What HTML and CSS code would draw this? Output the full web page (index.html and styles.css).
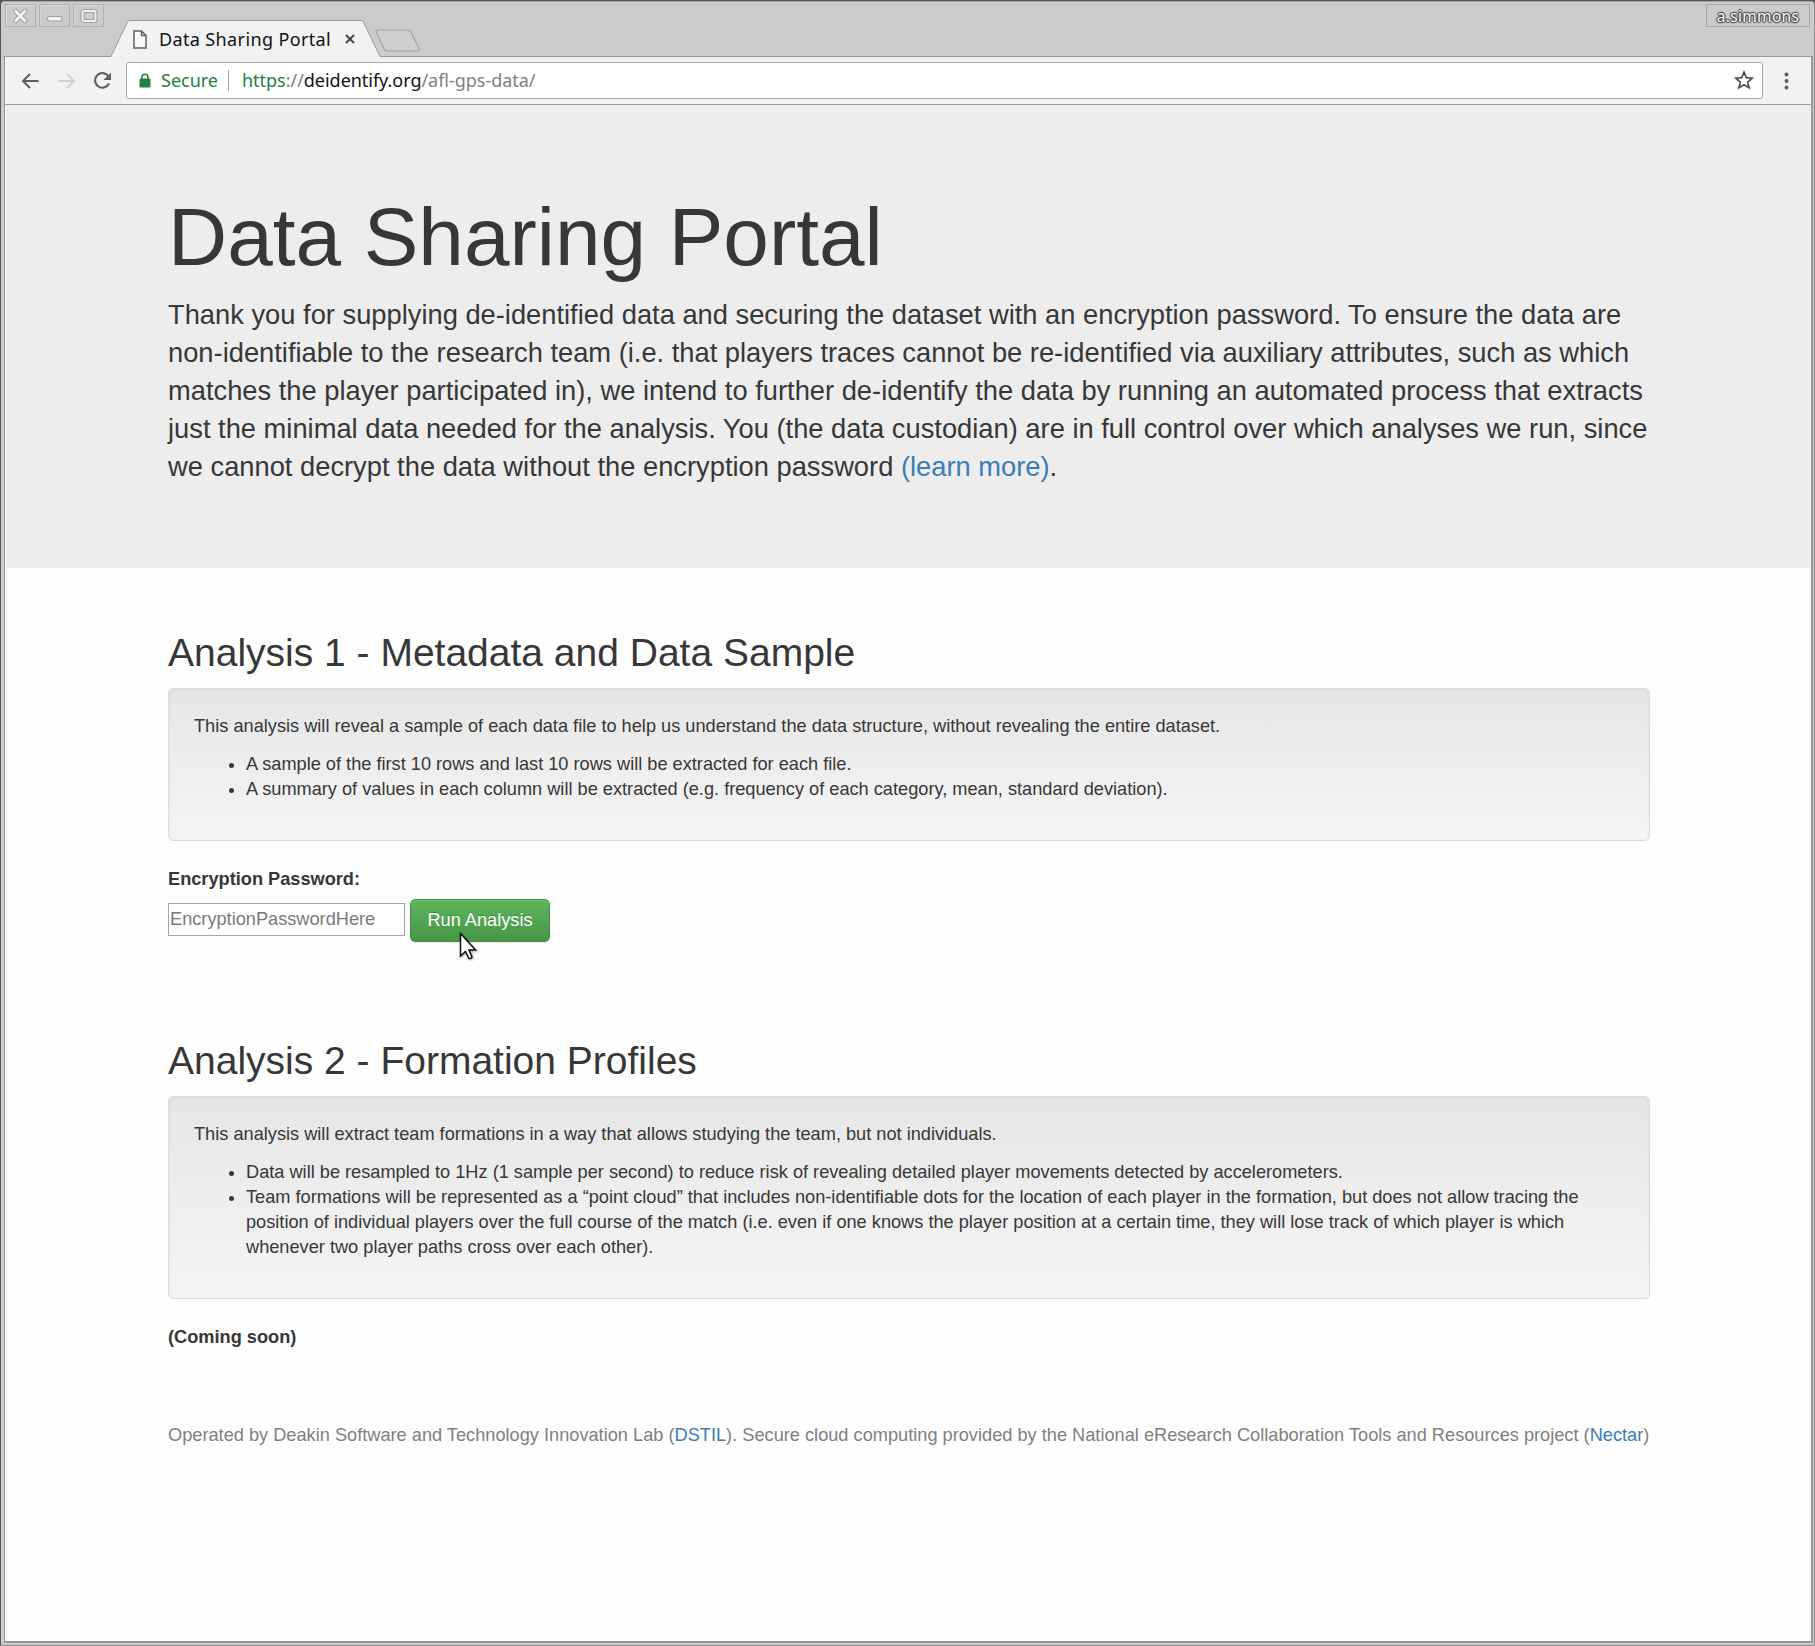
FILE: index.html
```html
<!DOCTYPE html>
<html lang="en">
<head>
<meta charset="utf-8">
<title>Data Sharing Portal</title>
<link rel="stylesheet" href="styles.css">
</head>
<body>
<div class="window">
  <header class="tabstrip">
    <div class="controls">
      <span class="control"><svg width="30" height="22" viewBox="0 0 30 22"><g fill="none" stroke-linecap="round"><path d="M9.5 6l9.500 10M19 6l-9.500 10" stroke="#a2a2a2" stroke-width="4.800"/><path d="M9.5 6l9.500 10M19 6l-9.500 10" stroke="#f4f4f4" stroke-width="2.600"/></g></svg></span>
      <span class="control"><svg width="30" height="22" viewBox="0 0 30 22"><rect x="7.5" y="11.500" width="14.500" height="4.500" rx="2" fill="#f4f4f4" stroke="#a0a0a0" stroke-width="1.200"/></svg></span>
      <span class="control"><svg width="30" height="22" viewBox="0 0 30 22"><rect x="8.500" y="6" width="13" height="10" rx="1.500" fill="none" stroke="#a0a0a0" stroke-width="4.200"/><rect x="8.500" y="6" width="13" height="10" rx="1.500" fill="none" stroke="#efefef" stroke-width="2"/></svg></span>
    </div>
    <div class="tab">
      <svg class="tab-shape" width="270" height="38" viewBox="0 0 270 38"><path d="M0 36.500L16.500 2Q17.500.500 19 .500H250Q251.500.500 252.500 2L269 36.500V38H0z" fill="#f2f2f2"/><path d="M0 36.500L16.500 2Q17.500.500 19 .500H250Q251.500.500 252.500 2L269 36.500" fill="none" stroke="#999"/></svg>
      <svg class="page-icon" width="14" height="19" viewBox="0 0 14 19"><path d="M1 1H8.500L13 5.500V18H1zM8.500 1V5.500H13" fill="#f8f8f8" stroke="#606060" stroke-width="1.500"/></svg>
      <span class="tab-title">Data Sharing Portal</span>
      <svg class="tab-close" width="10" height="10" viewBox="0 0 10 10"><path d="M1 1l8 8M9 1L1 9" stroke="#444" stroke-width="1.900"/></svg>
    </div>
    <svg class="new-tab" width="46" height="23" viewBox="0 0 46 23"><path d="M3.500 1H33Q35 1 36 3L44 19.500Q45 22 43 22H12Q10 22 9 20L1.500 3.500Q.500 1 3.500 1z" fill="#cecece" stroke="#a2a2a2" stroke-width="1.200"/></svg>
    <span class="user">a.simmons</span>
  </header>
  <nav class="toolbar">
    <svg class="back" width="18" height="16" viewBox="0 0 18 16"><path d="M17.500 8H2M9 1L2 8l7 7" fill="none" stroke="#5d5e60" stroke-width="2"/></svg>
    <svg class="forward" width="18" height="16" viewBox="0 0 18 16"><path d="M.500 8H16M9 1l7 7-7 7" fill="none" stroke="#d0d0d0" stroke-width="2"/></svg>
    <svg class="reload" width="19" height="18" viewBox="0 0 19 18"><path d="M15.600 4.500A7.300 7.300 0 1 0 16 11.500" fill="none" stroke="#5d5e60" stroke-width="2.100"/><path d="M18 .500V8H10.500z" fill="#5d5e60"/></svg>
    <div class="address">
      <svg class="lock" width="12" height="15" viewBox="0 0 12 15"><path d="M3 7V4.200a3 3 0 0 1 6 0V7" fill="none" stroke="#238140" stroke-width="1.600"/><rect x=".5" y="5.500" width="11" height="9" rx="1.200" fill="#238140"/></svg>
      <span class="secure">Secure</span>
      <span class="divider"></span>
      <span class="url"><span class="scheme">https</span>://<span class="host">deidentify.org</span>/afl-gps-data/</span>
      <svg class="star" width="20" height="20" viewBox="0 0 20 20"><path d="M10 2.200L12.300 7.700L18.200 8.200L13.700 12L15.100 17.800L10 14.700L4.900 17.800L6.300 12L1.800 8.200L7.700 7.700z" fill="none" stroke="#505050" stroke-width="1.700"/></svg>
    </div>
    <svg class="menu" width="5" height="18" viewBox="0 0 5 18"><g fill="#5d5e60"><circle cx="2.500" cy="2.500" r="2"/><circle cx="2.500" cy="9" r="2"/><circle cx="2.500" cy="15.500" r="2"/></g></svg>
  </nav>
  <main class="page">
    <section class="jumbotron">
      <div class="container">
        <h1>Data Sharing Portal</h1>
        <p>Thank you for supplying de-identified data and securing the dataset with an encryption password. To ensure the data are non-identifiable to the research team (i.e. that players traces cannot be re-identified via auxiliary attributes, such as which matches the player participated in), we intend to further de-identify the data by running an automated process that extracts just the minimal data needed for the analysis. You (the data custodian) are in full control over which analyses we run, since we cannot decrypt the data without the encryption password <a href="#">(learn more)</a>.</p>
      </div>
    </section>
    <div class="container">
      <section class="analysis">
        <h2>Analysis 1 - Metadata and Data Sample</h2>
        <div class="well">
          <p>This analysis will reveal a sample of each data file to help us understand the data structure, without revealing the entire dataset.</p>
          <ul>
            <li>A sample of the first 10 rows and last 10 rows will be extracted for each file.</li>
            <li>A summary of values in each column will be extracted (e.g. frequency of each category, mean, standard deviation).</li>
          </ul>
        </div>
        <label for="password">Encryption Password:</label>
        <form class="run">
          <input id="password" type="text" placeholder="EncryptionPasswordHere">
          <button type="button">Run Analysis<svg class="cursor" width="22" height="30" viewBox="0 0 22 30"><path d="M1.500 1.500V24L6.500 19.500L10 26.500Q12 27 13 25.200L10 18H16.500z" fill="#fff" stroke="#111" stroke-width="1.500"/></svg></button>
        </form>
      </section>
      <section class="analysis">
        <h2>Analysis 2 - Formation Profiles</h2>
        <div class="well">
          <p>This analysis will extract team formations in a way that allows studying the team, but not individuals.</p>
          <ul>
            <li>Data will be resampled to 1Hz (1 sample per second) to reduce risk of revealing detailed player movements detected by accelerometers.</li>
            <li>Team formations will be represented as a “point cloud” that includes non-identifiable dots for the location of each player in the formation, but does not allow tracing the position of individual players over the full course of the match (i.e. even if one knows the player position at a certain time, they will lose track of which player is which whenever two player paths cross over each other).</li>
          </ul>
        </div>
        <strong class="soon">(Coming soon)</strong>
      </section>
      <footer>Operated by Deakin Software and Technology Innovation Lab (<a href="#">DSTIL</a>). Secure cloud computing provided by the National eResearch Collaboration Tools and Resources project (<a href="#">Nectar</a>)</footer>
    </div>
  </main>
</div>
</body>
</html>
```
FILE: styles.css
```css
* { box-sizing: border-box; }
body { margin: 0; background: #555; color: #373737; font: 18.2px/25px "Liberation Sans", Arial, sans-serif; }
a { color: #3a7db8; text-decoration: none; }
svg { display: block; flex: none; }
.window { height: 1646px; display: flex; flex-direction: column; overflow: hidden; background: #cbcbcb; border: 1px solid #555; border-bottom-color: #8b8b8b; border-right-color: #8b8b8b; border-radius: 5px 5px 0 0; }
.tabstrip { height: 55px; flex: none; display: flex; align-items: flex-start; padding: 2px 4px 0 4px; border-top: 1px solid #a5a5a5; }
.controls { display: flex; gap: 3px; }
.control { width: 31px; height: 23px; border: 1px solid #b0b0b0; box-shadow: inset 1px 1px #d6d6d6; display: flex; align-items: center; justify-content: center; }
.tab { position: relative; display: flex; align-items: center; width: 270px; height: 38px; margin: 16px 0 -2px 7px; padding: 0 24px 0 22px; font: 18px/24px "Noto Sans", sans-serif; color: #111; }
.tab-shape { position: absolute; left: 0; top: 0; }
.page-icon, .tab-title, .tab-close { position: relative; }
.tab-title { margin-left: 12px; width: 171px; white-space: nowrap; letter-spacing: .37px; }
.tab-close { margin-left: 15px; }
.new-tab { margin: 25px 0 0 -6px; }
.user { margin-left: auto; width: 104px; height: 23px; border: 1px solid #a8a8a8; text-align: center; font: 15.5px/22px "Noto Sans", sans-serif; letter-spacing: .3px; color: #fff; text-shadow: 0 0 2px #333, 1px 0 1px #444, -1px 0 1px #444, 0 1px 1px #444, 0 -1px 1px #444; }
.toolbar { height: 49px; flex: none; display: flex; align-items: center; background: #f2f2f2; border: solid #999; border-width: 1px 2px 1px 1px; margin: 0 1px 0 3px; padding: 0 22px 0 16px; }
.forward { margin-left: 19px; }
.reload { margin-left: 17px; }
.address { flex: 1; margin: 0 21px 1px 14px; height: 37px; display: flex; align-items: center; padding: 0 8px 0 12px; background: #fff; border: 1px solid #aaa; border-radius: 3px; font: 18px/24px "Noto Sans", sans-serif; color: #808080; }
.secure { margin-left: 10px; width: 56px; color: #238140; }
.divider { width: 1px; height: 21px; margin: 0 13px 0 11px; background: #aaa; }
.url { letter-spacing: -.03px; }
.scheme { color: #238140; }
.host { color: #111; }
.star { margin-left: auto; }
.page { flex: 1; background: #fefefe; border: solid #999; border-width: 0 2px 2px 1px; margin: 0 1px 2px 3px; box-shadow: inset 2px 0 #f2f2f2, inset -1px 0 #f2f2f2; }
.container { width: 1482px; margin-left: 163px; }
.jumbotron { height: 463px; margin: 0 1px 39px 2px; padding-top: 87px; background: #ededed; }
.jumbotron .container { margin-left: 161px; }
h1, h2 { margin: 0; font-weight: 500; }
h1 { font-size: 81.9px; line-height: 90px; margin-bottom: 14px; }
.jumbotron p { margin: 0; font-size: 27.3px; line-height: 38px; }
h2 { padding-top: 25px; font-size: 39px; line-height: 42px; margin-bottom: 14px; }
.analysis { height: 408px; }
.well { padding: 25px; margin-bottom: 26px; border: 1px solid #dcdcdc; border-radius: 5px; background: linear-gradient(#e6e6e6, #f5f5f5); box-shadow: inset 0 1px 4px rgba(0,0,0,.05); }
.well p { margin: 0 0 13px; }
.well ul { margin: 0 0 13px; padding-left: 52px; }
label { display: block; font-weight: 700; }
.run { display: flex; align-items: center; gap: 5px; margin-top: 7px; }
input { width: 237px; height: 33px; margin: 0 0 2px; padding: 1px; border: 1px solid #a5a5a5; background: #fff; font: 18.2px "Liberation Sans", sans-serif; }
input::placeholder { color: #7a7a7a; }
button { position: relative; width: 140px; height: 43px; padding: 0; border: 1px solid #439243; border-radius: 5px; background: linear-gradient(#60b560, #459645); box-shadow: inset 0 1px rgba(255,255,255,.15), 0 1px 1px rgba(0,0,0,.08); color: #fff; font: 18.2px/25px "Liberation Sans", sans-serif; text-shadow: 0 -1px rgba(0,0,0,.2); }
.cursor { position: absolute; left: 48px; top: 32px; filter: drop-shadow(1px 1px 1px rgba(0,0,0,.35)); }
.soon { display: block; }
footer { white-space: nowrap; color: #808080; letter-spacing: .005px; }
```
